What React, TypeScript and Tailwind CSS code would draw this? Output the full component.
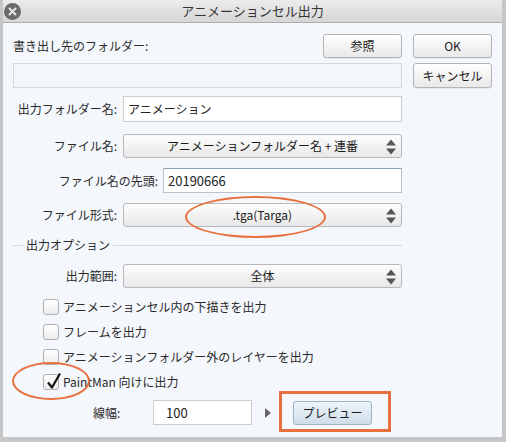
import React from 'react'

const font = { fontFamily: '"Noto Sans CJK JP", "Noto Sans", sans-serif' }

function Btn({ children, className = '' }: { children: React.ReactNode; className?: string }) {
  return (
    <div
      className={`flex h-[24px] w-[79px] items-center justify-center rounded-[3px] border border-[#b4b4b4] bg-gradient-to-b from-[#ffffff] to-[#e9e9e9] text-[12px] text-[#1a1a1a] shadow-[0_1px_0_rgba(0,0,0,0.06)] ${className}`}
    >
      {children}
    </div>
  )
}

function Arrows() {
  return (
    <svg width="12" height="18" viewBox="0 0 12 18" className="absolute right-[4px] top-[3px]">
      <path d="M1 7.5 L6 1.5 L11 7.5 Z" fill="#555" />
      <path d="M1 10.5 L6 16.5 L11 10.5 Z" fill="#555" />
    </svg>
  )
}

function Select({ value }: { value: string }) {
  return (
    <div className="relative flex h-[24px] flex-1 items-center justify-center rounded-[3px] border border-[#b8b8b8] bg-gradient-to-b from-[#fdfdfd] to-[#e8e8e8] text-[12px] text-[#1a1a1a]">
      <span className="whitespace-pre">{value}</span>
      <Arrows />
    </div>
  )
}

function Label({ children, w = 'w-[104px]' }: { children: React.ReactNode; w?: string }) {
  return <div className={`${w} shrink-0 text-right text-[12px] text-[#2a2a2a]`}>{children}</div>
}

function Check({ label, checked = false }: { label: string; checked?: boolean }) {
  return (
    <div className="flex h-[16px] items-center pl-[30px]">
      <div className="relative h-[16px] w-[16px] rounded-[3px] border border-[#b0b0b0] bg-gradient-to-b from-[#ffffff] to-[#ececec]">
        {checked && (
          <svg width="18" height="18" viewBox="0 0 18 18" className="absolute left-[1px] top-[-3px]">
            <path d="M3 10.5 L7 15.5 L15 1.5" fill="none" stroke="#111" strokeWidth="2.2" strokeLinejoin="round" />
          </svg>
        )}
      </div>
      <span className="ml-[4px] text-[12px] text-[#2a2a2a]">{label}</span>
    </div>
  )
}

export default function App() {
  return (
    <div style={font} className="relative h-[442px] w-[506px] overflow-hidden bg-[#f4f7fc]">
      <div className="flex h-full flex-col border-b-[5px] border-l-[3px] border-r-[4px] border-[#c6c6c6]">
        {/* Title bar */}
        <div className="relative flex h-[23px] shrink-0 items-center justify-center border-b border-[#aeaeae] bg-gradient-to-b from-[#ececec] to-[#d6d6d6]">
          <div className="absolute left-[1px] top-[3px] flex h-[17px] w-[17px] items-center justify-center rounded-full bg-[#6b6b6b]">
            <svg width="9" height="9" viewBox="0 0 9 9">
              <path d="M1.5 1.5 L7.5 7.5 M7.5 1.5 L1.5 7.5" stroke="#e8e8e8" strokeWidth="2" strokeLinecap="round" />
            </svg>
          </div>
          <span className="text-[13px] text-[#333]">アニメーションセル出力</span>
        </div>

        {/* Body */}
        <div className="flex flex-1 pl-[10px] pt-[11px]">
          <div className="flex w-[389px] flex-col">
            <div className="flex h-[24px] items-center justify-between">
              <span className="text-[12px] text-[#2a2a2a]">書き出し先のフォルダー:</span>
              <Btn>参照</Btn>
            </div>
            <div className="mt-[5px] h-[25px] border border-[#d3d8de] bg-[#f3f6fa]" />

            <div className="mt-[8px] flex h-[26px] items-center gap-[6px]">
              <Label>出力フォルダー名:</Label>
              <div className="flex h-full flex-1 items-center border border-[#cdcdcd] bg-white px-[4px] text-[12px] text-[#222]">
                アニメーション
              </div>
            </div>

            <div className="mt-[12px] flex h-[24px] items-center gap-[6px]">
              <Label>ファイル名:</Label>
              <Select value="アニメーションフォルダー名 + 連番" />
            </div>

            <div className="mt-[10px] flex h-[25px] items-center gap-[5px]">
              <Label w="w-[145px]">ファイル名の先頭:</Label>
              <div className="flex h-full flex-1 items-center border border-[#b9c3cd] border-t-[#8fa3b6] bg-white px-[4px] text-[13px] text-[#222]">
                20190666
              </div>
            </div>

            <div className="mt-[10px] flex h-[24px] items-center gap-[6px]">
              <Label>ファイル形式:</Label>
              <Select value=".tga(Targa)" />
            </div>

            <div className="mt-[11px] flex h-[14px] items-center">
              <div className="h-px w-[10px] bg-[#d5d9de]" />
              <span className="mx-[3px] text-[12px] text-[#2a2a2a]">出力オプション</span>
              <div className="h-px flex-1 bg-[#d5d9de]" />
            </div>

            <div className="mt-[12px] flex h-[24px] items-center gap-[6px]">
              <Label>出力範囲:</Label>
              <Select value="全体" />
            </div>

            <div className="mt-[11px] flex flex-col gap-[9px]">
              <Check label="アニメーションセル内の下描きを出力" />
              <Check label="フレームを出力" />
              <Check label="アニメーションフォルダー外のレイヤーを出力" />
              <Check label="PaintMan 向けに出力" checked />
            </div>

            <div className="mt-[10px] flex h-[25px] items-center">
              <span className="ml-[80px] w-[60px] text-[12px] text-[#2a2a2a]">線幅:</span>
              <div className="flex h-full w-[99px] items-center border border-[#cdcdcd] bg-white px-[12px] text-[13px] text-[#222]">
                100
              </div>
              <svg width="6" height="10" viewBox="0 0 6 10" className="ml-[13px]">
                <path d="M0 0 L6 5 L0 10 Z" fill="#666" />
              </svg>
              <div className="ml-[22px] flex h-[24px] w-[79px] items-center justify-center rounded-[3px] border border-[#9eb3c6] bg-gradient-to-b from-[#eef4fa] to-[#cfdde9] text-[12px] text-[#1a1a1a]">
                プレビュー
              </div>
            </div>
          </div>

          <div className="ml-[11px] flex flex-col gap-[5px]">
            <Btn>OK</Btn>
            <Btn className="h-[25px]">キャンセル</Btn>
          </div>
        </div>
      </div>

      {/* Annotations */}
      <div className="pointer-events-none absolute left-[185px] top-[196px] h-[42px] w-[141px] rounded-[50%] border-[2.5px] border-[#e8703f]" />
      <div className="pointer-events-none absolute left-[12px] top-[362px] h-[38px] w-[78px] rounded-[50%] border-[2.5px] border-[#e8703f]" />
      <div className="pointer-events-none absolute left-[279px] top-[391px] h-[41px] w-[112px] border-[3px] border-[#e8703f]" />
    </div>
  )
}
